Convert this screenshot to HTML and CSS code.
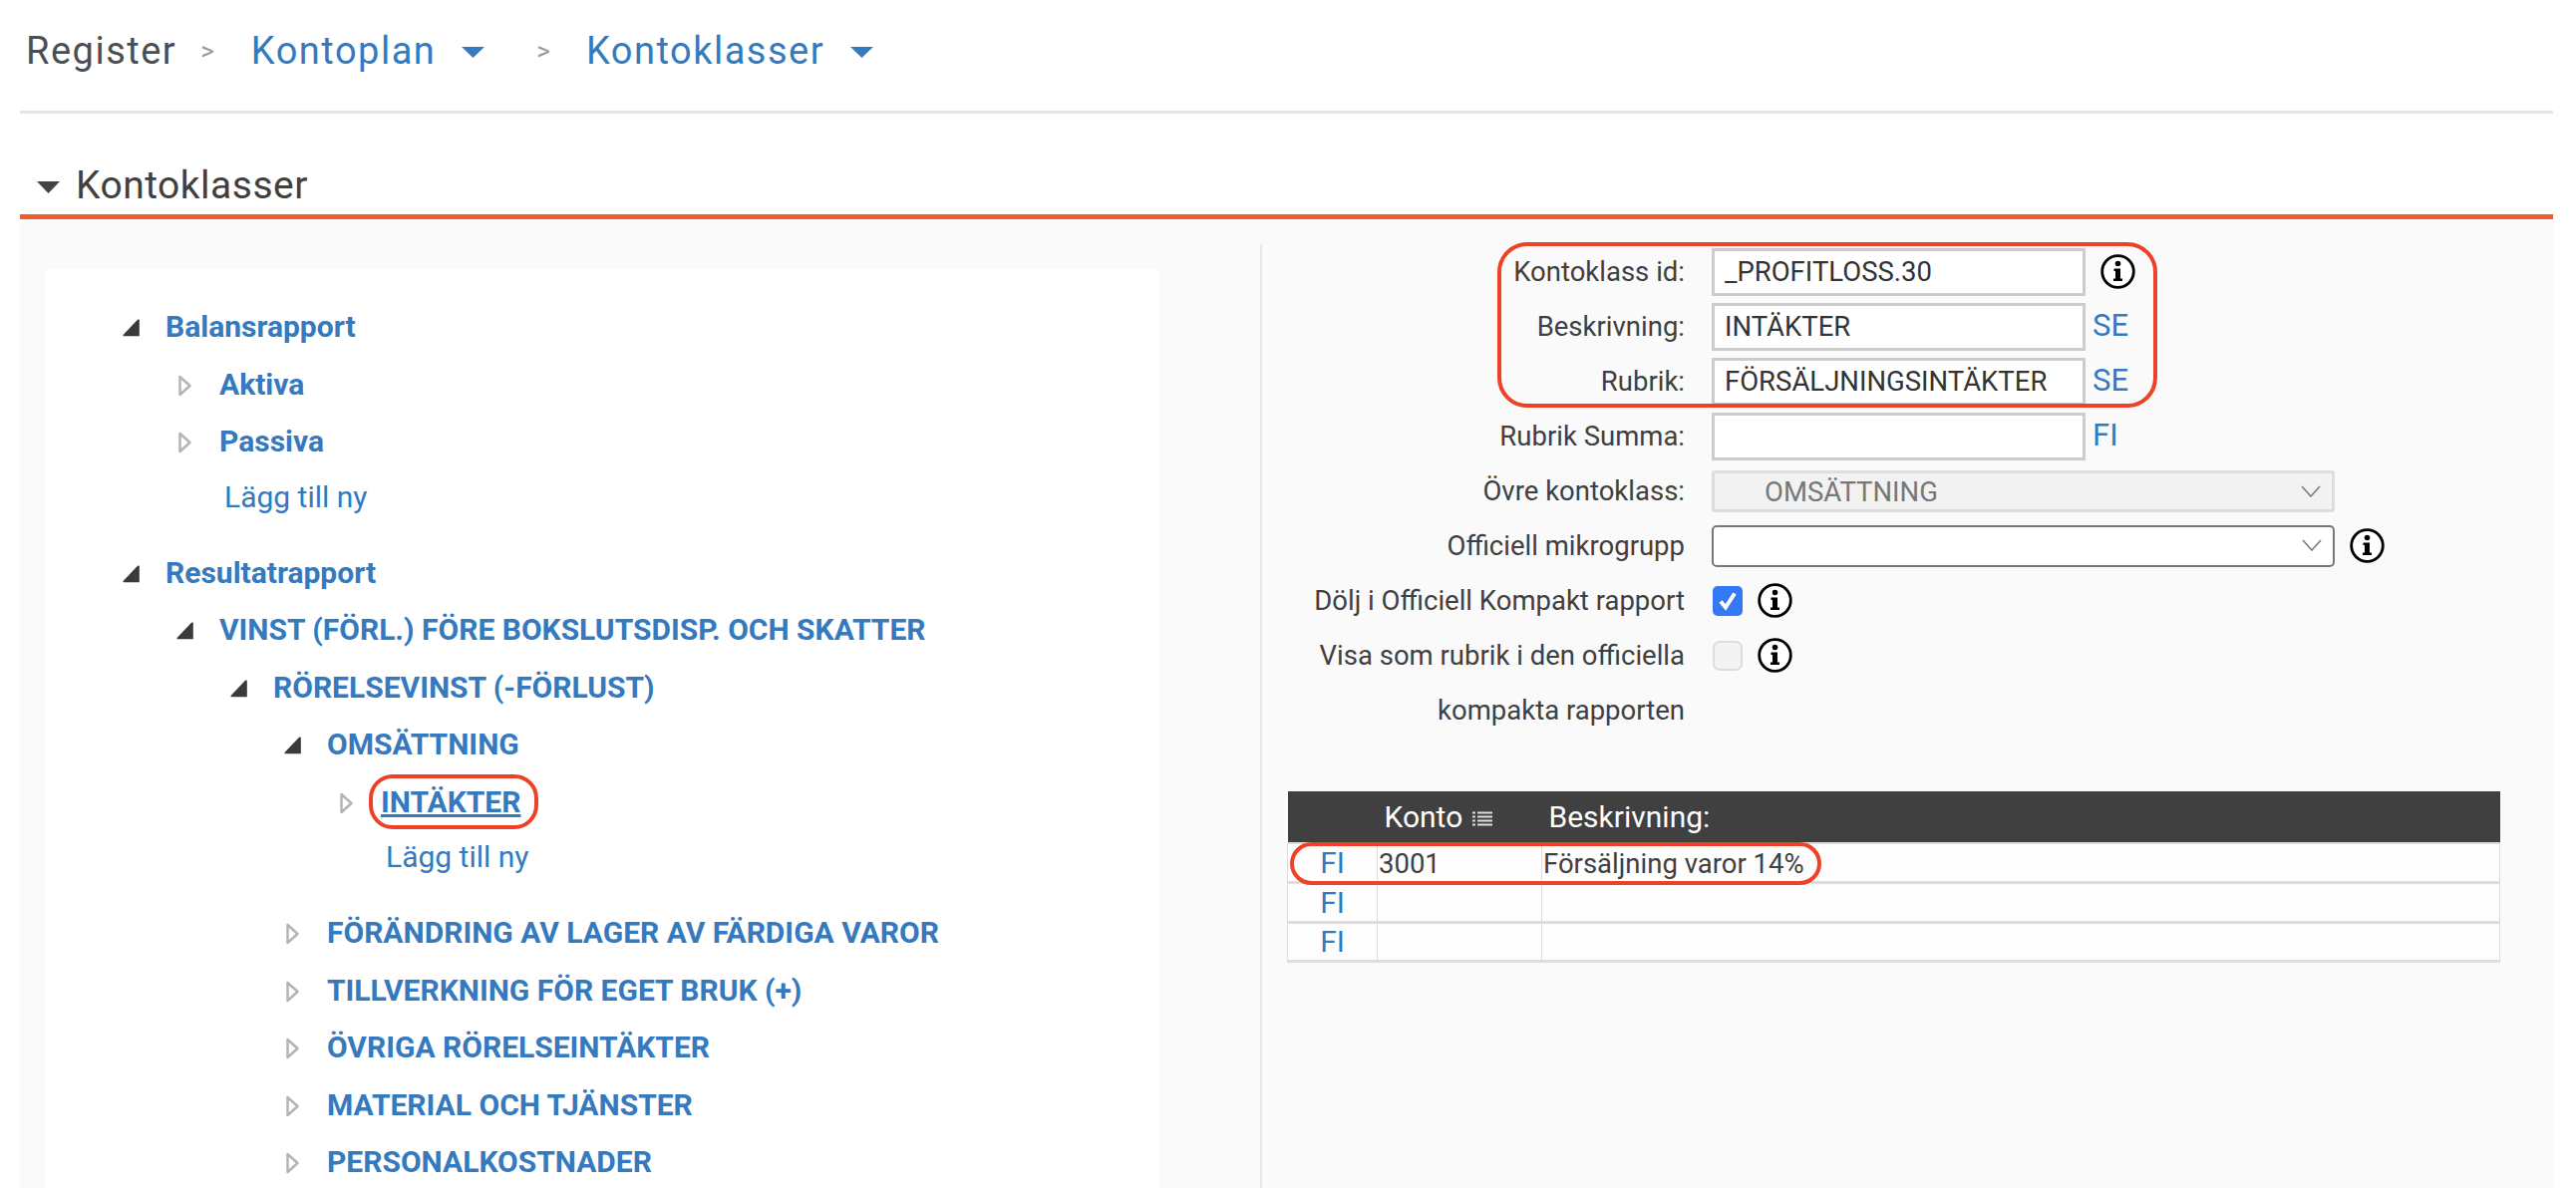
FILE: index.html
```html
<!DOCTYPE html>
<html lang="sv">
<head>
<meta charset="utf-8">
<title>Kontoklasser</title>
<link rel="stylesheet" href="styles.css">
</head>
<body>
<div class="page">
  <nav class="crumbs">
    <span class="crumb-root">Register</span>
    <span class="sep sep-a">&gt;</span>
    <a class="crumb-link">Kontoplan</a>
    <svg class="caret" width="23" height="11" viewBox="0 0 23 11"><path d="M0 0H23L11.500 11Z"/></svg>
    <span class="sep sep-b">&gt;</span>
    <a class="crumb-link">Kontoklasser</a>
    <svg class="caret" width="23" height="11" viewBox="0 0 23 11"><path d="M0 0H23L11.500 11Z"/></svg>
  </nav>
  <h1 class="title">
    <svg class="title-caret" width="23" height="12" viewBox="0 0 23 12"><path d="M0 0H23L11.500 12Z"/></svg>
    Kontoklasser
  </h1>
  <div class="panel">
    <div class="tree-card">
      <ul class="tree">
        <li class="node"><svg class="arrow"><use href="#open"/></svg><a class="node-link">Balansrapport</a>
          <ul class="tree">
            <li class="node"><svg class="arrow"><use href="#closed"/></svg><a class="node-link">Aktiva</a></li>
            <li class="node"><svg class="arrow"><use href="#closed"/></svg><a class="node-link">Passiva</a></li>
            <li class="add"><a class="add-link">Lägg till ny</a></li>
          </ul>
        </li>
        <li class="node node-gap"><svg class="arrow"><use href="#open"/></svg><a class="node-link">Resultatrapport</a>
          <ul class="tree">
            <li class="node"><svg class="arrow"><use href="#open"/></svg><a class="node-link">VINST (FÖRL.) FÖRE BOKSLUTSDISP. OCH SKATTER</a>
              <ul class="tree">
                <li class="node"><svg class="arrow"><use href="#open"/></svg><a class="node-link">RÖRELSEVINST (-FÖRLUST)</a>
                  <ul class="tree">
                    <li class="node"><svg class="arrow"><use href="#open"/></svg><a class="node-link">OMSÄTTNING</a>
                      <ul class="tree">
                        <li class="node"><svg class="arrow"><use href="#closed"/></svg><a class="node-link current">INTÄKTER</a></li>
                        <li class="add"><a class="add-link">Lägg till ny</a></li>
                      </ul>
                    </li>
                    <li class="node node-gap"><svg class="arrow"><use href="#closed"/></svg><a class="node-link">FÖRÄNDRING AV LAGER AV FÄRDIGA VAROR</a></li>
                    <li class="node"><svg class="arrow"><use href="#closed"/></svg><a class="node-link">TILLVERKNING FÖR EGET BRUK (+)</a></li>
                    <li class="node"><svg class="arrow"><use href="#closed"/></svg><a class="node-link">ÖVRIGA RÖRELSEINTÄKTER</a></li>
                    <li class="node"><svg class="arrow"><use href="#closed"/></svg><a class="node-link">MATERIAL OCH TJÄNSTER</a></li>
                    <li class="node"><svg class="arrow"><use href="#closed"/></svg><a class="node-link">PERSONALKOSTNADER</a></li>
                  </ul>
                </li>
              </ul>
            </li>
          </ul>
        </li>
      </ul>
    </div>
    <div class="detail">
      <div class="form">
        <label class="lbl">Kontoklass id:</label>
        <div class="ctl"><input class="inp" value="_PROFITLOSS.30"><svg class="info info-near"><use href="#info"/></svg></div>
        <label class="lbl">Beskrivning:</label>
        <div class="ctl"><input class="inp" value="INTÄKTER"><a class="lang">SE</a></div>
        <label class="lbl">Rubrik:</label>
        <div class="ctl"><input class="inp" value="FÖRSÄLJNINGSINTÄKTER"><a class="lang">SE</a></div>
        <label class="lbl">Rubrik Summa:</label>
        <div class="ctl"><input class="inp" value=""><a class="lang">FI</a></div>
        <label class="lbl">Övre kontoklass:</label>
        <div class="ctl">
          <div class="sel sel-off">OMSÄTTNING<svg class="chev" width="20" height="12" viewBox="0 0 20 12"><path d="M1 1L10 11L19 1"/></svg></div>
        </div>
        <label class="lbl">Officiell mikrogrupp</label>
        <div class="ctl">
          <div class="sel sel-on"><svg class="chev" width="20" height="12" viewBox="0 0 20 12"><path d="M1 1L10 11L19 1"/></svg></div>
          <svg class="info info-sel"><use href="#info"/></svg>
        </div>
        <label class="lbl">Dölj i Officiell Kompakt rapport</label>
        <div class="ctl">
          <span class="check check-on"><svg width="30" height="30" viewBox="0 0 30 30"><path d="M8 15.500L13 21.500L22 7.500" fill="none" stroke="#fff" stroke-width="4"/></svg></span>
          <svg class="info info-check"><use href="#info"/></svg>
        </div>
        <label class="lbl">Visa som rubrik i den officiella<br>kompakta rapporten</label>
        <div class="ctl">
          <span class="check check-off"></span>
          <svg class="info info-check"><use href="#info"/></svg>
        </div>
      </div>
      <table class="accounts">
        <colgroup><col class="col-lang"><col class="col-no"><col></colgroup>
        <thead>
          <tr><th></th><th class="th-no">Konto <svg class="sort" width="20" height="17" viewBox="0 0 20 17"><path d="M0 1.500H3M5 1.500H20M0 5.500H3M5 5.500H20M0 9.500H3M5 9.500H20M0 13.500H3M5 13.500H20" stroke="#ddd" stroke-width="2"/></svg></th><th class="th-desc">Beskrivning:</th></tr>
        </thead>
        <tbody>
          <tr><td class="td-lang">FI</td><td>3001</td><td>Försäljning varor 14%</td></tr>
          <tr><td class="td-lang">FI</td><td></td><td></td></tr>
          <tr><td class="td-lang">FI</td><td></td><td></td></tr>
        </tbody>
      </table>
    </div>
  </div>
  <div class="mark mark-node"></div>
  <div class="mark mark-form"></div>
  <div class="mark mark-row"></div>
</div>
<svg class="defs" width="0" height="0">
  <defs>
    <symbol id="open" viewBox="0 0 16 16"><path d="M15 1.500V15H2C1.200 15 1 14.300 1.500 13.700L13.300 1.200C14 .6 15 .8 15 1.500Z" fill="#3a3a3a"/></symbol>
    <symbol id="closed" viewBox="0 0 14 22"><path d="M2 2L12 11L2 20Z" fill="#fff" stroke="#b4b4b4" stroke-width="2.500" stroke-linejoin="round"/></symbol>
    <symbol id="info" viewBox="0 0 35 35">
      <circle cx="17.500" cy="17.500" r="15.800" fill="#fff" stroke="#000" stroke-width="2.800"/>
      <circle cx="17.500" cy="9.500" r="2.800" fill="#000"/>
      <path d="M13.500 14.500H20V24.500H22V27H13V24.500H15V17H13.500Z" fill="#000"/>
    </symbol>
  </defs>
</svg>
</body>
</html>
```
FILE: styles.css
```css
html, body { margin: 0; padding: 0; height: 1192px; overflow: hidden; background: #fff; }
* { box-sizing: border-box; }
body { font-family: Roboto, "Liberation Sans", sans-serif; color: #404040; }
.page { position: relative; height: 1192px; padding: 0 23px 0 20px; overflow: hidden; }
a { color: #3579be; }

.crumbs { display: flex; align-items: center; height: 114px; padding: 0 0 10px 6px; border-bottom: 3px solid #e4e4e4; font-size: 38px; letter-spacing: 1.500px; }
.crumb-root { color: #4a4f55; }
.crumb-link { color: #3579be; }
.sep { font-size: 26px; color: #999; letter-spacing: 0; }
.sep-a { margin: 0 37px 0 24px; }
.sep-b { margin: 0 36px 0 52px; }
.caret { fill: #3579be; margin-left: 26px; margin-top: 4px; }

.title { display: flex; align-items: center; height: 106px; margin: 0; padding: 43px 0 0 17px; border-bottom: 5px solid #f05c2a; font-size: 39px; font-weight: 400; color: #404040; letter-spacing: .5px; }
.title-caret { fill: #444; margin-right: 16px; margin-top: 4px; }

.panel { display: flex; height: 972px; background: #fafafa; padding-left: 25px; }
.tree-card { width: 1118px; margin-top: 50px; background: #fff; padding: 29px 0 0 0; flex: none; }
.tree { list-style: none; margin: 0; padding: 0 0 0 54px; }
.tree-card > .tree { padding-left: 50px; }
.node { position: relative; padding-left: 71px; line-height: 57.500px; font-size: 30px; font-weight: 700; white-space: nowrap; }
.node .tree { margin-left: -71px; }
.tree-card > .tree > .node > .tree { padding-left: 54px; }
.node-gap { margin-top: 20px; }
.arrow { position: absolute; left: 27px; top: 19px; width: 19px; height: 22px; filter: blur(.4px); }
.current { text-decoration: underline; }
.add { padding-left: 76px; line-height: 54px; font-size: 30px; }
.add-link { font-weight: 400; }

.detail { margin-left: 101px; margin-top: 25px; border-left: 2px solid #e8e8e8; flex: 1; padding-left: 25px; }
.form { display: grid; grid-template-columns: 424px 1fr; column-gap: 27px; margin-left: -25px; }
.lbl { text-align: right; line-height: 55px; font-size: 27.500px; color: #404040; white-space: nowrap; }
.ctl { display: flex; align-items: center; height: 55px; }
.inp { width: 375px; height: 48px; border: 3px solid #ccc; background: #fff; padding: 0 10px; font: 400 27.500px Roboto, sans-serif; color: #333; margin-top: 0; outline: none; border-radius: 0; }
.lang { margin-left: 7px; font-size: 31px; margin-top: -3px; color: #3579be; }
.sel { position: relative; width: 625px; height: 42px; line-height: 38px; font-size: 27.500px; border-radius: 3px; }
.sel-off { padding-left: 50px; background: #f2f2f2; border: 3px solid #ddd; color: #777; }
.sel-on { background: #fff; border: 2px solid #777; border-radius: 5px; }
.chev { position: absolute; right: 11px; top: 12px; fill: none; stroke: #777; stroke-width: 1.500; }
.check { display: block; width: 30px; height: 30px; border-radius: 5px; flex: none; margin-left: 1px; }
.check-on { background: #3478f6; }
.check-off { background: #f3f3f3; border: 2px solid #ddd; border-radius: 7px; }
.info { width: 35px; height: 35px; flex: none; }
.info-near { margin-left: 15px; }
.info-sel { margin-left: 15px; }
.info-check { margin-left: 15px; }

.accounts { table-layout: fixed; width: 1217px; margin-top: 54px; border-collapse: collapse; background: #fdfdfd; font-size: 27.500px; }
.col-lang { width: 90px; }
.col-no { width: 165px; }
.accounts thead tr { height: 52px; background: #404040; color: #fff; }
.accounts th { font-weight: 400; text-align: left; padding: 0 0 0 7px; font-size: 30px; }
.sort { vertical-align: -1px; margin-left: 2px; }
.accounts tbody tr { height: 39.500px; border-bottom: 3px solid #ddd; }
.accounts tbody tr:first-child { border-top: 2px solid #ddd; }
.accounts td { padding: 2px 0 0 1px; border-left: 1px solid #ddd; border-right: 1px solid #ddd; color: #404040; }
.accounts .td-lang { text-align: center; color: #3579be; font-size: 30px; padding: 0; }

.mark { position: absolute; border: 4.500px solid #ee4226; }
.mark-node { left: 370px; top: 777px; width: 170px; height: 55px; border-radius: 24px; }
.mark-form { left: 1502px; top: 243px; width: 662px; height: 166px; border-radius: 30px; }
.mark-row { left: 1294px; top: 845px; width: 533px; height: 43px; border-radius: 22px; }
.defs { position: absolute; }
```
